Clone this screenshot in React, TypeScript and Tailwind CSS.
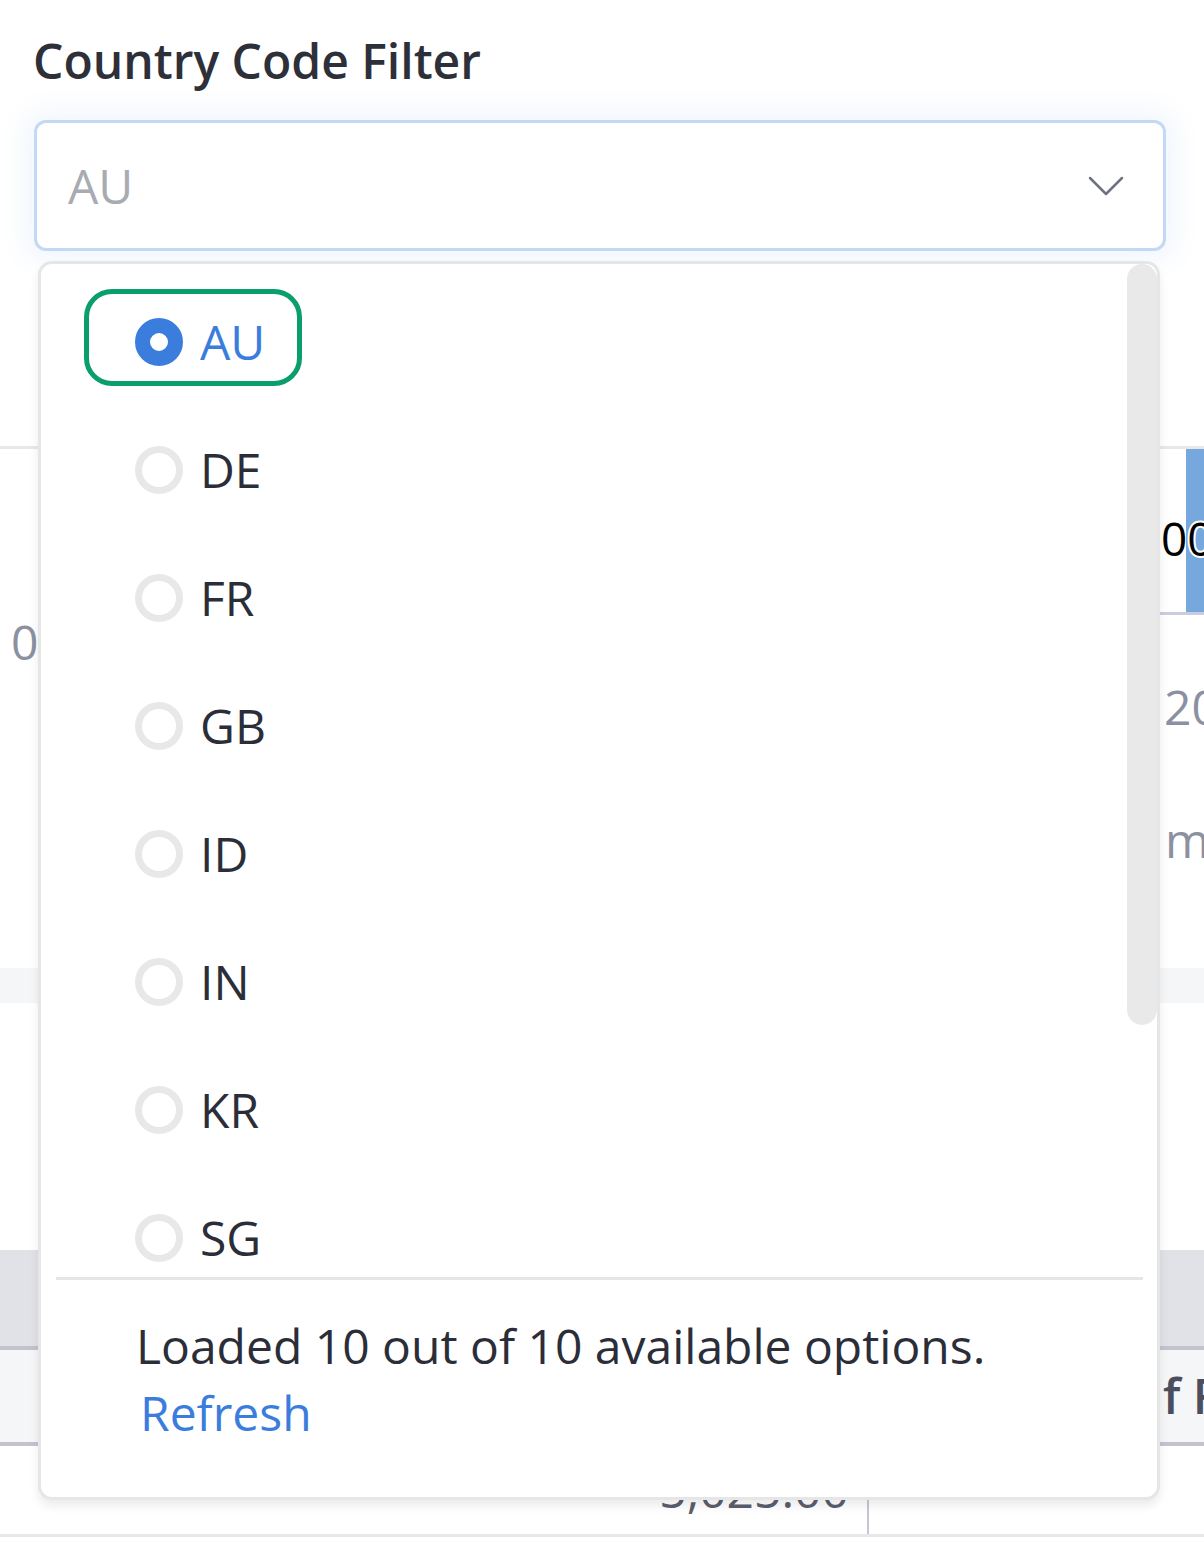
import React from "react";

const options = ["AU", "DE", "FR", "GB", "ID", "IN", "KR", "SG", "TH", "US"];

function Radio({ selected }: { selected: boolean }) {
  return selected ? (
    <span className="block w-[48px] h-[48px] rounded-full border-[15px] border-[#3b7ddd] bg-white shrink-0" />
  ) : (
    <span className="block w-[48px] h-[48px] rounded-full border-[7px] border-[#e8e8e8] bg-white shrink-0" />
  );
}

export default function App() {
  return (
    <div className="relative w-full h-[1544px] overflow-hidden bg-white font-['Open_Sans',sans-serif]">
      {/* Title */}
      <div className="pl-[33px] pt-[29px] text-[48px] leading-[64px] font-semibold text-[#2e3039]">
        Country Code Filter
      </div>

      {/* Select input */}
      <div className="mt-[27px] ml-[34px] w-[1132px] h-[131px] border-[3px] border-[#c3d9f3] rounded-[12px] bg-white flex items-center justify-between pl-[31px] pr-[39px] shadow-[0_0_26px_10px_rgba(59,125,221,0.07)]">
        <span className="text-[48px] leading-[64px] text-[#a9abb2]">AU</span>
        <svg width="36" height="20" viewBox="0 0 36 20" fill="none">
          <polyline points="2,2 18,18 34,2" stroke="#6f7282" strokeWidth="2.5" strokeLinecap="round" strokeLinejoin="round" />
        </svg>
      </div>

      {/* Background page content */}
      <div className="h-[195px]" />
      <div className="border-t-[3px] border-[#e8e8ea] h-[522px] flex justify-between">
        <div className="w-[38px] pt-[161px] pl-[11px] text-[48px] leading-[64px] text-[#8b91a1]">0</div>
        <div className="w-[44px] flex flex-col">
          <div className="relative h-[163px] flex">
            <div className="w-[26px] bg-white" />
            <div className="flex-1 bg-[#76a8dd]" />
            <span className="absolute left-[1px] top-[57px] text-[46px] leading-[64px] text-black [paint-order:stroke_fill] [-webkit-text-stroke:4px_white]">
              <span className="[-webkit-text-stroke:0px]">0</span>0
            </span>
          </div>
          <div className="h-[3px] bg-[#c8cee0]" />
          <div className="mt-[60px] pl-[4px] text-[48px] leading-[64px] text-[#8b91a1] whitespace-nowrap">20</div>
          <div className="mt-[69px] pl-[5px] text-[48px] leading-[64px] text-[#8b91a1] whitespace-nowrap">m</div>
        </div>
      </div>
      <div className="h-[35px] bg-[#f5f6f8]" />
      <div className="h-[247px]" />
      <div className="h-[96px] bg-[#e1e2e7]" />
      <div className="h-[4px] bg-[#c2c3cd]" />
      <div className="h-[92px] bg-[#f5f6f8] grid grid-cols-[868px_1fr] items-center">
        <div />
        <div className="pl-[295px] text-[48px] leading-[64px] font-semibold text-[#4b4e5c] whitespace-nowrap overflow-hidden">
          f Fields
        </div>
      </div>
      <div className="h-[4px] bg-[#c2c3cd]" />
      <div className="h-[91px] grid grid-cols-[869px_1fr] border-b-[3px] border-[#e8e8e8]">
        <div className="border-r-[2px] border-[#c5c7d0] flex items-center justify-end pr-[18px] text-[48px] leading-[64px] text-[#5b5e6d]">
          5,025.00
        </div>
        <div />
      </div>

      {/* Dropdown menu overlay */}
      <div className="absolute left-[38px] top-[261px] w-[1122px] h-[1239px] bg-white border-[3px] border-[#e6e6e6] rounded-[14px] shadow-[0_6px_10px_rgba(0,0,0,0.08)] flex flex-col overflow-hidden">
        <div className="relative h-[1013px] overflow-hidden">
          <div className="pt-[14px]">
            {options.map((o, i) => {
              const sel = i === 0;
              return (
                <div key={o} className="h-[128px] flex items-center pl-[43px]">
                  <div
                    className={
                      sel
                        ? "-mt-[9px] h-[97px] flex items-center gap-[17px] pl-[46px] pr-[32px] pt-[9px] rounded-[28px] border-[5px] border-[#0a9e6e]"
                        : "h-[97px] flex items-center gap-[17px] pl-[46px] pr-[32px] rounded-[28px] border-[5px] border-transparent"
                    }
                  >
                    <Radio selected={sel} />
                    <span className={sel ? "text-[48px] leading-[64px] text-[#3b7ddd]" : "text-[48px] leading-[64px] text-[#2b2e39]"}>
                      {o}
                    </span>
                  </div>
                </div>
              );
            })}
          </div>
          <div className="absolute right-0 top-0 w-[30px] h-[761px] rounded-full bg-[#e9e9e9]" />
        </div>
        <div className="ml-[15px] mr-[14px] h-[3px] bg-[#e6e6e6]" />
        <div className="pt-[32px] pl-[95px] text-[48px] leading-[67px] text-[#2b2e39]">
          <div>Loaded 10 out of 10 available options.</div>
          <div className="ml-[4px] text-[#3b7ddd]">Refresh</div>
        </div>
      </div>
    </div>
  );
}
